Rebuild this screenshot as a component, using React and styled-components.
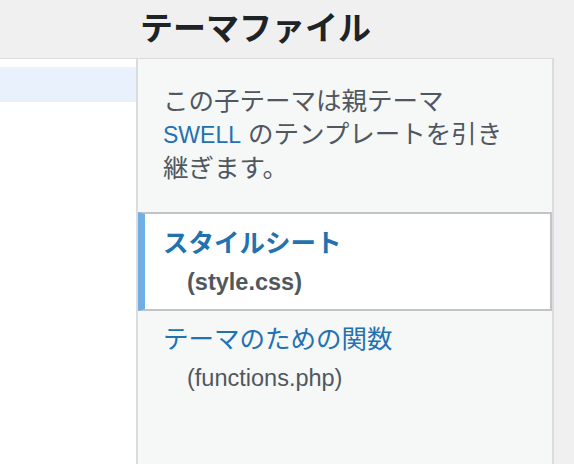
import React from "react";
import styled, { createGlobalStyle, css } from "styled-components";

const GlobalStyle = createGlobalStyle`
  html, body {
    margin: 0;
    padding: 0;
    background: #f0f0f1;
    font-family: "Liberation Sans", "Noto Sans CJK JP", sans-serif;
  }
  * { box-sizing: border-box; }
`;

const Page = styled.div`
  display: flex;
  flex-direction: column;
  height: 100vh;
  overflow: hidden;
`;

const Header = styled.header`
  height: 58px;
  padding-left: 140px;
  flex: none;
`;

const Title = styled.h2`
  margin: 0;
  font-size: 33px;
  line-height: 57px;
  font-weight: 700;
  color: #1d2327;
  white-space: nowrap;
`;

const Body = styled.div`
  flex: 1;
  display: flex;
  align-items: stretch;
`;

const Editor = styled.div`
  width: 138px;
  flex: none;
  background: #fff;
  border-top: 1px solid #dcdcde;
  border-right: 2px solid #dcdcde;
  padding-top: 8px;
`;

const ActiveLine = styled.div`
  height: 35px;
  background: #e8f1fc;
`;

const Sidebar = styled.aside`
  width: 416px;
  flex: none;
  background: #f6f7f7;
  border-top: 1px solid #dcdcde;
  border-right: 2px solid #dcdcde;
`;

const Intro = styled.p`
  margin: 0 0 27px;
  padding: 26px 25px 0;
  font-size: 25.5px;
  line-height: 33px;
  color: #50575e;
`;

const ThemeLink = styled.a`
  color: #2271b1;
  font-size: 23px;
  text-decoration: none;
`;

const FileList = styled.ul`
  list-style: none;
  margin: 0;
  padding: 0;
`;

const FileItem = styled.li`
  padding: 12px 25px 12px;
  ${(p) =>
    p.$active &&
    css`
      background: #fff;
      border: 2px solid #c3c4c7;
      border-left: 7px solid #72aee6;
      padding: 13px 25px 10px 18px;
    `}
`;

const FileName = styled.a`
  display: block;
  font-size: 25.5px;
  line-height: 33px;
  color: #2271b1;
  text-decoration: none;
  font-weight: ${(p) => (p.$active ? 700 : 400)};
`;

const FileMeta = styled.span`
  display: block;
  margin-top: 6px;
  padding-left: 24px;
  font-size: 23.5px;
  line-height: 33px;
  color: #50575e;
  font-weight: ${(p) => (p.$active ? 700 : 400)};
`;

const files = [
  { name: "スタイルシート", file: "(style.css)", active: true },
  { name: "テーマのための関数", file: "(functions.php)", active: false },
];

export default function App() {
  return (
    <>
      <GlobalStyle />
      <Page>
        <Header>
          <Title>テーマファイル</Title>
        </Header>
        <Body>
          <Editor>
            <ActiveLine />
          </Editor>
          <Sidebar>
            <Intro>
              この子テーマは親テーマ <ThemeLink href="#">SWELL</ThemeLink>{" "}
              のテンプレートを引き継ぎます。
            </Intro>
            <FileList>
              {files.map((f) => (
                <FileItem key={f.file} $active={f.active}>
                  <FileName href="#" $active={f.active}>
                    {f.name}
                  </FileName>
                  <FileMeta $active={f.active}>{f.file}</FileMeta>
                </FileItem>
              ))}
            </FileList>
          </Sidebar>
        </Body>
      </Page>
    </>
  );
}
